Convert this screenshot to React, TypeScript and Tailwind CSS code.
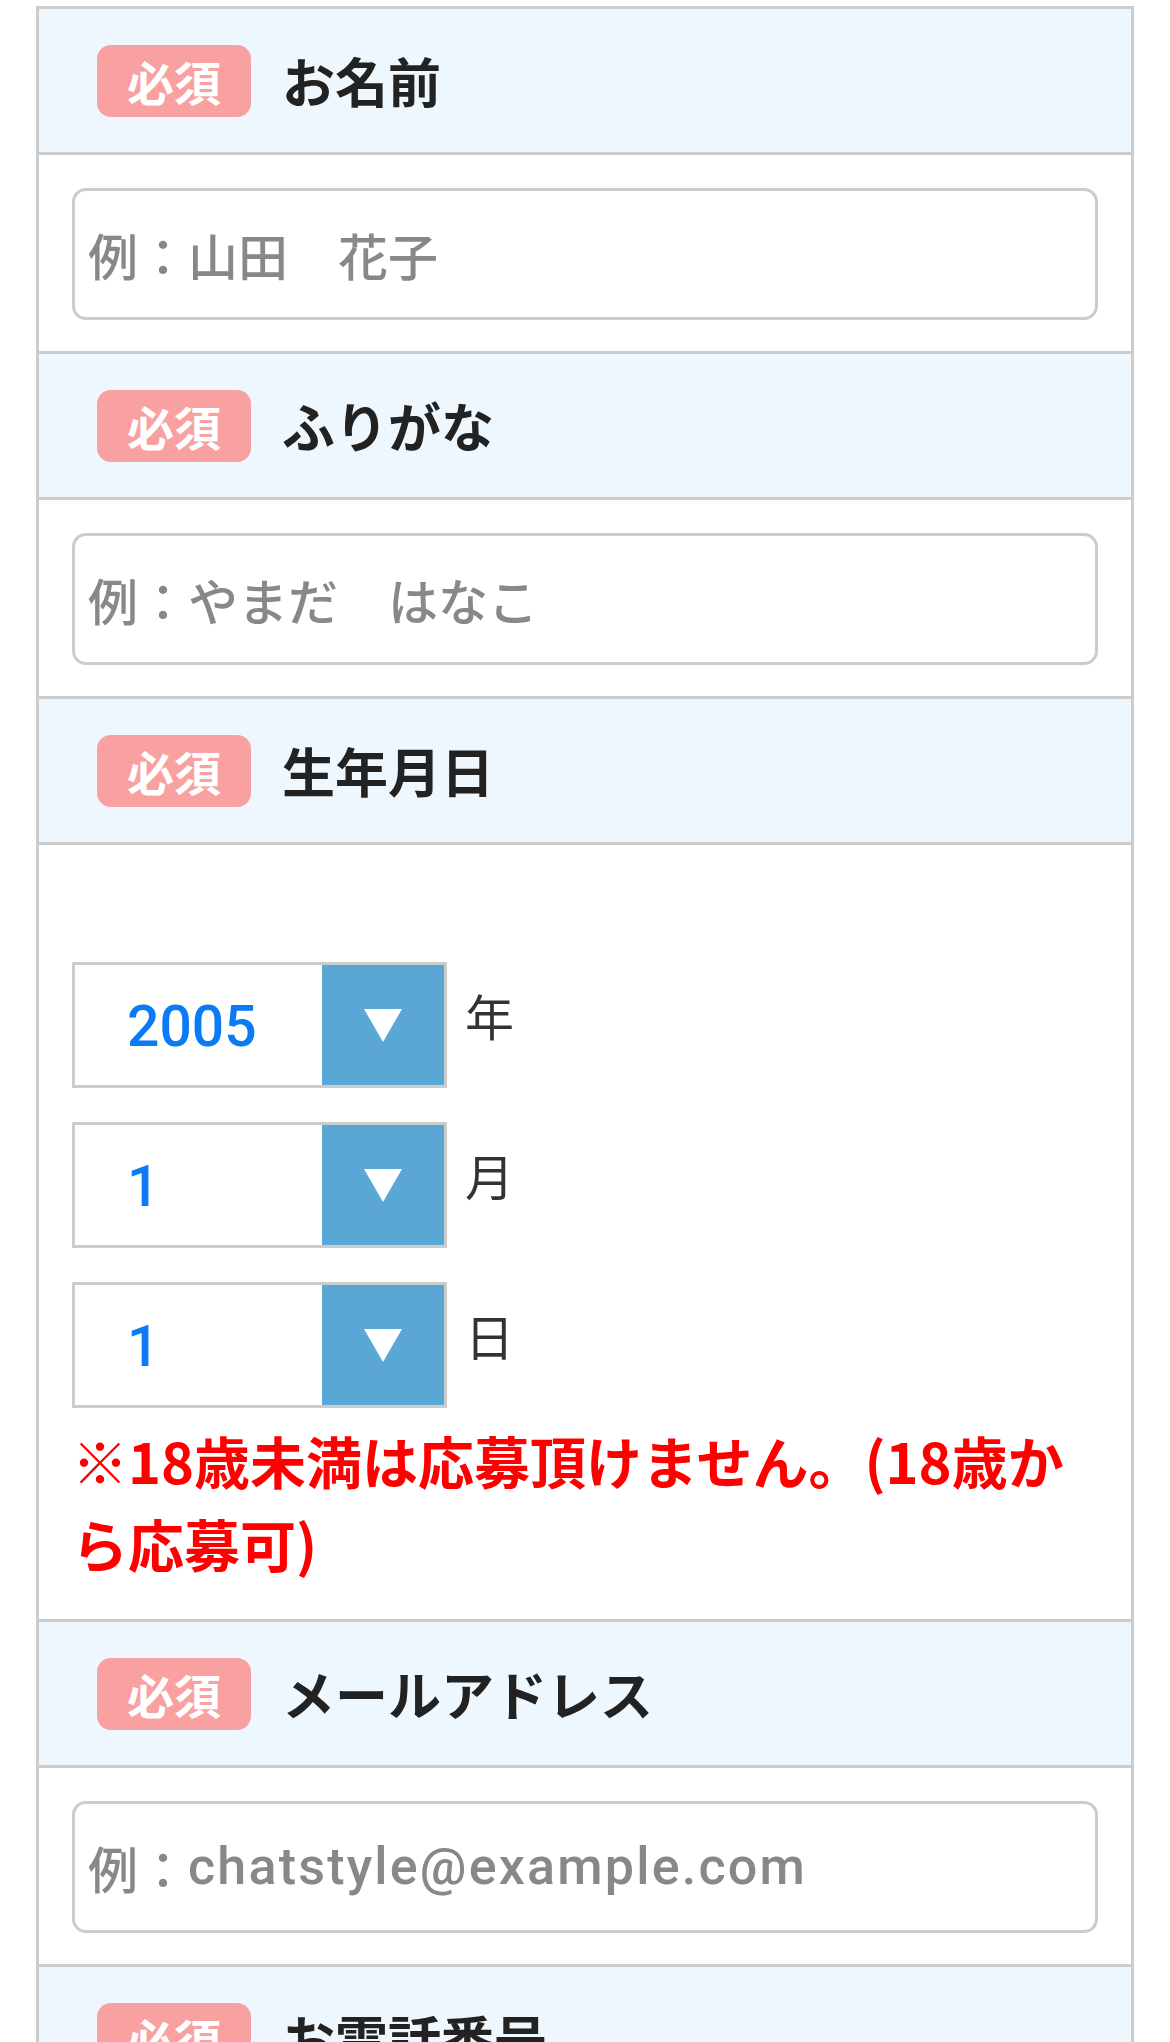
const jp = "font-['Noto_Sans_CJK_JP','Noto_Sans',sans-serif]"

function Badge() {
  return (
    <span className="inline-flex h-[72px] w-[154px] shrink-0 items-center justify-center rounded-[14px] bg-[#f9a1a1] text-[47px] font-bold leading-none text-white">
      必須
    </span>
  )
}

function Head({ label }: { label: string }) {
  return (
    <div className="flex h-[146px] items-center gap-[31px] border-b-[3px] border-[#cccccc] bg-[#edf7fd] pl-[58px]">
      <Badge />
      <span className="text-[53px] font-bold leading-none text-[#222222]">{label}</span>
    </div>
  )
}

function TextRow({ example, latin }: { example: string; latin?: boolean }) {
  return (
    <div className="border-b-[3px] border-[#cccccc] px-[33px] pt-[33px] pb-[31px]">
      <div className="flex h-[132px] w-full items-center rounded-[14px] border-[3px] border-[#cccccc] bg-white px-[13px] text-[50px] font-medium text-[#888888]">
        <span>例：</span>
        <span
          className={
            latin
              ? "font-['Roboto','Liberation_Sans',sans-serif] text-[52px] tracking-[2.2px]"
              : ''
          }
        >
          {example}
        </span>
      </div>
    </div>
  )
}

function DateSelect({ value, unit }: { value: string; unit: string }) {
  return (
    <div className="flex items-center gap-[18px]">
      <div className="flex h-[126px] w-[375px] border-[3px] border-[#cccccc] bg-white">
        <div className="flex flex-1 items-center pt-[3px] pl-[52px] font-['Roboto','Liberation_Sans',sans-serif] text-[57px] font-medium text-[#0a7af5]">
          {value}
        </div>
        <div className="flex w-[122px] items-center justify-center bg-[#5aa7d5]">
          <svg width="38" height="33" viewBox="0 0 38 33">
            <polygon points="0,0 38,0 19,33" fill="#ffffff" />
          </svg>
        </div>
      </div>
      <span className="mb-[22px] text-[49px] leading-none text-[#333333]">{unit}</span>
    </div>
  )
}

export default function App() {
  return (
    <div className={`min-h-[2042px] bg-white pt-[6px] ${jp}`}>
      <div className="mx-[36px] border-x-[3px] border-t-[3px] border-[#cccccc]">
        <Head label="お名前" />
        <TextRow example="山田　花子" />

        <Head label="ふりがな" />
        <TextRow example="やまだ　はなこ" />

        <Head label="生年月日" />
        <div className="border-b-[3px] border-[#cccccc] px-[33px] pt-[117px] pb-[35px]">
          <div className="flex flex-col gap-[34px]">
            <DateSelect value="2005" unit="年" />
            <DateSelect value="1" unit="月" />
            <DateSelect value="1" unit="日" />
          </div>
          <p className="mt-[10px] text-[56px] font-bold leading-[83px] text-[#ff0000]">
            ※18歳未満は応募頂けません。(18歳から応募可)
          </p>
        </div>

        <Head label="メールアドレス" />
        <TextRow example="chatstyle@example.com" latin />

        <Head label="お電話番号" />
        <TextRow example="09012345678" latin />
      </div>
    </div>
  )
}
